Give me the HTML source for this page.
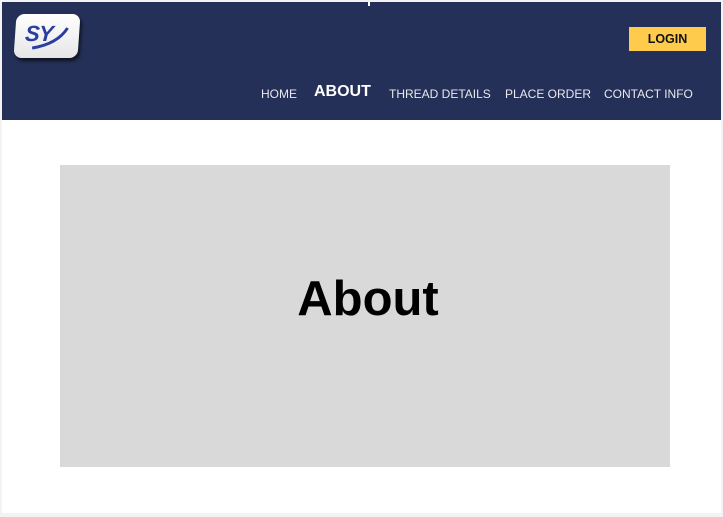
<!DOCTYPE html>
<html><head><meta charset="utf-8"><style>
html,body{margin:0;padding:0;}
body{width:723px;height:517px;background:#f3f3f3;font-family:"Liberation Sans",sans-serif;position:relative;overflow:hidden;}
.page{position:absolute;left:2px;top:2px;width:719px;height:511px;background:#fff;}
.hdr{position:absolute;left:0;top:0;width:719px;height:118px;background:#243057;}
.tick{position:absolute;left:366px;top:0;width:2px;height:4px;background:#fff;}
.logo{position:absolute;left:13px;top:12px;width:64px;height:44px;border-radius:8px;background:linear-gradient(#fff,#e6e6e6);box-shadow:2px 3px 3px rgba(0,0,0,.6);transform:skewX(-4deg);}
.logo span{position:absolute;left:10px;top:7px;font:italic bold 22px "Liberation Sans",sans-serif;color:#2a3ea0;letter-spacing:-1px;}
.login{position:absolute;left:627px;top:25px;width:77px;height:24px;background:#ffcb4c;color:#111;font-weight:bold;font-size:12.5px;text-align:center;line-height:25px;}
.nav{position:absolute;top:85px;color:#e8e8ee;font-size:12px;white-space:nowrap;}
.nav.b{font-weight:bold;font-size:16px;color:#fff;top:81px;}
.box{position:absolute;left:58px;top:163px;width:610px;height:302px;background:#d9d9d9;}
.box h1{margin:0;position:absolute;left:0;right:0;top:106px;text-align:center;font-size:49px;font-weight:bold;color:#000;padding-left:6px;}
</style></head><body>
<div class="page">
<div class="hdr">
<div class="tick"></div>
<div class="logo"><span>SY</span><svg style="position:absolute;left:8px;top:8px" width="50" height="30"><path d="M10 26 Q35 22 44 6" stroke="#2a3ea0" stroke-width="3" fill="none"/></svg></div>
<div class="login">LOGIN</div>
<div class="nav" style="left:259px">HOME</div>
<div class="nav b" style="left:312px">ABOUT</div>
<div class="nav" style="left:387px">THREAD DETAILS</div>
<div class="nav" style="left:503px">PLACE ORDER</div>
<div class="nav" style="left:602px">CONTACT INFO</div>
</div>
<div class="box"><h1>About</h1></div>
</div>
</body></html>
